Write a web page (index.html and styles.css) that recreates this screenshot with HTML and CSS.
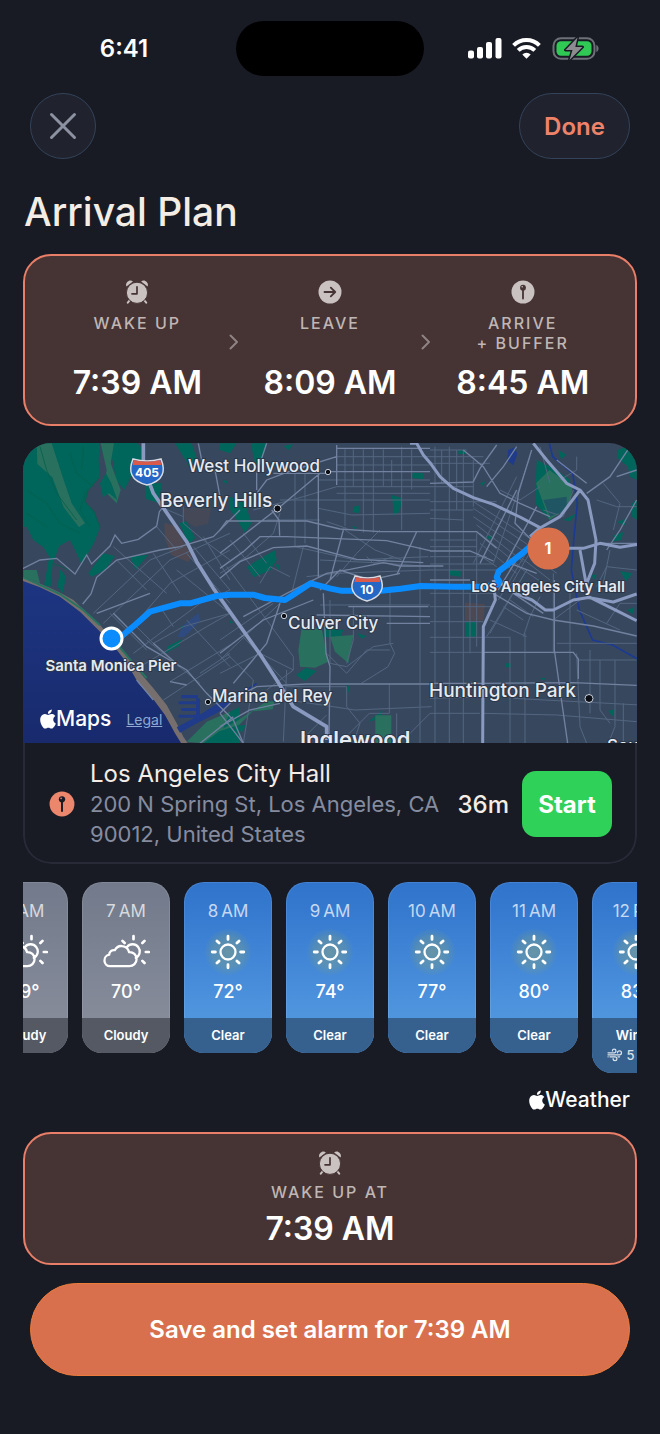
FILE: index.html
```html
<!DOCTYPE html>
<html lang="en">
<head>
<meta charset="utf-8">
<meta name="viewport" content="width=device-width, initial-scale=1">
<title>Arrival Plan</title>
<link rel="stylesheet" href="styles.css">
</head>
<body>
<svg class="defs" aria-hidden="true">
  <symbol id="alarm" viewBox="0 0 24 24">
    <path fill="currentColor" d="M1.400 6.600C.400 4.600 1.300 1.800 3.700.900 5.200.300 6.900.600 7.900 1.600zM22.600 6.600C23.600 4.600 22.700 1.800 20.300.900 18.800.300 17.100.600 16.100 1.600z"/>
    <path stroke="currentColor" stroke-width="2" stroke-linecap="round" d="M4.500 20.500 2.800 22.700M19.500 20.500l1.700 2.200"/>
    <circle class="cut" cx="12" cy="12.800" r="10.600" fill="currentColor" stroke-width="1"/>
    <path class="cut" fill="none" stroke-width="1.700" stroke-linecap="round" stroke-linejoin="round" d="M12 6.800v7H7"/>
  </symbol>
  <symbol id="go" viewBox="0 0 24 24">
    <circle cx="12" cy="12" r="11.500" fill="currentColor"/>
    <path class="cut" fill="none" stroke-width="1.800" stroke-linecap="round" stroke-linejoin="round" d="M6.500 12h10.500M12.800 7.600 17.200 12l-4.400 4.400"/>
  </symbol>
  <symbol id="pin" viewBox="0 0 24 24">
    <circle cx="12" cy="12" r="11.500" fill="currentColor"/>
    <circle class="cut-fill" cx="12" cy="7.700" r="2.900"/>
    <path class="cut" stroke-width="1.800" stroke-linecap="round" d="M12 10v8.500"/>
    <circle cx="11.200" cy="6.800" r=".8" fill="currentColor"/>
  </symbol>
  <symbol id="chevron" viewBox="0 0 10 16">
    <path fill="none" stroke="currentColor" stroke-width="2" stroke-linecap="round" stroke-linejoin="round" d="M1.500 1.500 8 8l-6.500 6.500"/>
  </symbol>
  <symbol id="apple" viewBox="2 0 20 24">
    <path fill="currentColor" d="M12.152 6.896c-.948 0-2.415-1.078-3.960-1.040-2.040.027-3.910 1.183-4.961 3.014-2.117 3.675-.546 9.103 1.519 12.090 1.013 1.454 2.208 3.090 3.792 3.039 1.520-.065 2.090-.987 3.935-.987 1.831 0 2.350.987 3.960.948 1.637-.026 2.676-1.480 3.676-2.948 1.156-1.688 1.636-3.325 1.662-3.415-.039-.013-3.182-1.221-3.220-4.857-.026-3.040 2.480-4.494 2.597-4.559-1.429-2.090-3.623-2.324-4.390-2.376-2-.156-3.675 1.090-4.610 1.090zM15.530 3.830c.843-1.012 1.400-2.427 1.245-3.830-1.207.052-2.662.805-3.532 1.818-.780.896-1.454 2.338-1.273 3.714 1.338.104 2.715-.688 3.559-1.701"/>
  </symbol>
  <radialGradient id="glow"><stop offset="0" stop-color="#b5b44a" stop-opacity=".34"/><stop offset=".7" stop-color="#8fa860" stop-opacity=".24"/><stop offset="1" stop-color="#6f9a80" stop-opacity=".08"/></radialGradient>
  <symbol id="sun" viewBox="0 0 48 48">
    <circle cx="24" cy="24" r="23" fill="url(#glow)"/>
    <g fill="none" stroke="#fff" stroke-linecap="round">
      <circle cx="24" cy="24" r="7.500" stroke-width="2.300"/>
      <path stroke-width="2.800" d="M24 8.200v3.200M24 36.600v3.200M8.200 24h3.200M36.600 24h3.200M12.900 12.900l2.200 2.200M32.900 32.900l2.200 2.200M35.100 12.900l-2.200 2.200M15.100 32.900l-2.200 2.200"/>
    </g>
  </symbol>
  <symbol id="cloudy" viewBox="0 0 48 48">
    <g fill="none" stroke="#fff" stroke-linecap="round" stroke-linejoin="round">
      <path stroke-width="2.300" d="M8 38.200a5.800 5.800 0 0 1-.8-11.500c0-3 2.600-5 5.600-4.500 1.600-3 4.500-4.500 7.400-4.100 3.500.4 6 2.700 6.900 6 4.200-.3 7.500 2.800 7.500 6.900 0 4-3.200 7.200-7.200 7.200zM25 18.900a7.200 7.200 0 1 1 8.800 11"/>
      <path stroke-width="2.700" d="M31.500 8.200v3M20.500 12.900l2.100 2.100M42.500 12.900l-2.100 2.100M43.800 24h3M40.400 32.900l2.100 2.100"/>
    </g>
  </symbol>
  <symbol id="wind" viewBox="0 0 16 14">
    <path fill="none" stroke="currentColor" stroke-width="1.200" stroke-linecap="round" d="M1 4.800h6.200a1.800 1.800 0 1 0-1.800-1.800M1 6.800h11.500a2 2 0 1 0-2-2M3 8.800h5a1.900 1.900 0 1 1-1.900 1.900M1 8.800h.2M11 8.800h1.600"/>
  </symbol>
</svg>

<header class="status">
  <time class="clock">6:41</time>
  <div class="island"></div>
  <svg class="signals" viewBox="0 0 132 24" role="img" aria-label="Signal, Wi-Fi, battery charging">
    <g fill="#fff">
      <rect x="0" y="13.500" width="6" height="8" rx="2"/><rect x="9" y="10" width="6" height="11.500" rx="2"/><rect x="18" y="5" width="6" height="16.500" rx="2"/><rect x="27.500" y="1" width="6" height="20.500" rx="2"/>
      <path d="M58.500 21.800l-4.200-4.300a6 6 0 0 1 8.400 0z"/>
    </g>
    <g fill="none" stroke="#fff" stroke-width="4"><path d="M50.200 13.400a11.800 11.800 0 0 1 16.600 0"/><path d="M45.600 8.300a18.300 18.300 0 0 1 25.800 0"/></g>
    <rect x="85.500" y="1.200" width="41" height="20.600" rx="7.500" fill="none" stroke="#6e7078" stroke-width="2"/>
    <rect x="88.500" y="4.200" width="35" height="14.600" rx="4.500" fill="#30c954"/>
    <path d="M128.300 8v7c3-1.200 3-5.800 0-7z" fill="#6e7078"/>
    <path d="M109.500.5 97.500 13h7l-3 10 13-13h-7.200z" fill="#8d8b92" stroke="#191b24" stroke-width="3" stroke-linejoin="round" paint-order="stroke"/>
  </svg>
</header>

<main class="page">
  <nav class="toolbar">
    <button class="glass close" aria-label="Close"><svg viewBox="0 0 28 28" aria-hidden="true"><path d="M2.500 2.500l23 23M25.500 2.500l-23 23" stroke="currentColor" stroke-width="3" stroke-linecap="round"/></svg></button>
    <button class="glass done">Done</button>
  </nav>

  <h1>Arrival Plan</h1>

  <section class="tinted plan">
    <div class="step"><svg class="icon"><use href="#alarm"/></svg><span class="label">WAKE UP</span><time class="big">7:39 AM</time></div>
    <svg class="chev"><use href="#chevron"/></svg>
    <div class="step"><svg class="icon"><use href="#go"/></svg><span class="label">LEAVE</span><time class="big">8:09 AM</time></div>
    <svg class="chev"><use href="#chevron"/></svg>
    <div class="step"><svg class="icon"><use href="#pin"/></svg><span class="label">ARRIVE<br>+ BUFFER</span><time class="big">8:45 AM</time></div>
  </section>

  <section class="trip">
    <div class="map">
    <svg class="chart" viewBox="23 443 614 300" preserveAspectRatio="xMidYMid slice" role="img" aria-label="Route from Santa Monica Pier to Los Angeles City Hall">
      <defs>
        <linearGradient id="sea" x1="0" y1="0" x2="0" y2="1"><stop offset="0" stop-color="#1d3582"/><stop offset="1" stop-color="#182a6c"/></linearGradient>
      </defs>
      <rect x="0" y="400" width="700" height="400" fill="#37485e"/>
      <g transform="translate(20 440) scale(.333333)">
        <!-- parks and hills -->
        <g fill="#00655a">
          <path d="M0 0H240L236 60 240 110 205 150 195 185 222 215 240 262 222 310 185 372 165 330 150 300 118 318 98 370 92 440 72 436 88 350 70 322 40 300 20 260 0 262z"/>
          <path d="M112 440l10-52 14 20-6 52zM242 0l100 0 30 30-4 90-30-20-25 50-25-30-10-60-30-20zM375 130l50 0-8 60-40-14zM205 400l45-60 35 8-30 42-40 20zM330 350l55-6-38 46zM465 10l50 0 20 60-20 20zM478 250l20-6 28 50-20 18zM435 640l10-22 40-20-8 20zM480 560l15-4-6 14zM540 910l60-80 60-30v110zM120 390l15 40-12 30z"/>
          <g transform="translate(600)"><path d="M0 10h50l-20 30-30-10zM92 10h45l-10 70-22-10zM190 18l30-6-14 18zM30 170l45 20 20 60-20 28-45-70zM80 380l85-50 5 30-18 30-50 22zM165 372l16 4-6 14zM515 165l32 10-8 40-16 12zM402 200l16-4-2 24-18-4zM578 98l32 2v18l-34-4zM10 120l14 4-8 10zM228 705l30-22 32 10-36 30zM310 560l60 10-10 25-50-5zM410 580l30 8-14 8zM378 736l12 4-4 18zM445 845l42-34-4 24zM20 862l60-8-14 22zM396 258l16 4-8 6zM32 540l8 8-12 2z"/></g>
          <g transform="translate(1230)"><path d="M60 390l32 2v18l-32-4zM106 546h38v44h-38zM320 60l60 30 40 30 0 50-60 70-45-50zM562 30l58-20v110l-20-10-6-30-32-26zM400 240l40-20-20 24zM550 286l30-10-6 24-24 4zM570 394l38 6-20 24zM590 510l24-8-6 20zM534 812l20-4-4 22zM226 670h16v12h-16zM150 130l16-6-6 14zM85 30h20v12h-20zM168 290l18-4-6 14zM330 714l16 0-4 8zM385 30l24 14-16 14zM606 190l14-10v60l-14-10zM486 404l14 0-10 20zM560 246l30-10-6 20z"/></g>
        </g>
        <g fill="#29705f">
          <path d="M50 10h45l36 110 24 70 40 60-18 12-46-60-34-90-45-40zM242 10h40l-10 60 30 80-12 40-40-40 10-60zM10 390l40 0 10 40-50-20z"/>
          <path d="M500 905l60-60 70-30-20 50-60 45zM845 565l60 0 20 100-40 18-45-3-5-50zM930 590l70-5-15 85-40-35z"/>
          <path d="M1066 826h48v84h-48zM600 870l40-20 100-66 24 0-6 24-60 6-40 40-60 20zM1548 130l40-40 70 50-10 60-60 40z"/>
        </g>
        <path fill="#205663" d="M1570 180l70-10 0 40-50 20z"/>
        <path fill="#00655a" d="M240 130l18-30 16 30 18 50-25-20-18 12z"/>
        <g fill="#54484f"><path d="M433 248l30 10 52 90-10 18-50-20-20-50z" opacity=".8"/><path d="M490 205h84l-10 46-40 10-30-20z" opacity=".5"/><path d="M1335 488l60 4-5 50-55 0z" opacity=".8"/></g>
        <g stroke="#00604a" stroke-width="3" fill="none" opacity=".75"><path d="M60 20l20 70 30 70 60 80M150 40l20 60 50 40M190 20l-5 70M20 150l60 40 40 60 60 30M20 220l60 40M200 150l-20 60 30 50M98 370l50 20M240 110l-35 40-10 35 27 30 18 47"/></g>
        <!-- coast -->
        <path fill="#776f6d" d="M0 408Q90 440 160 480L240 555 300 625 335 668 400 745 440 795 470 850 490 890 510 920H470L420 850 370 790 350 740 300 660 230 572 150 495 0 425z"/>
        <path fill="url(#sea)" d="M0 420L60 442 120 470 180 515 235 570 275 610 320 668 355 730 400 778 435 825 465 880 490 920H0z"/>
        <path fill="none" stroke="#26735f" stroke-width="6" d="M10 412L120 462 190 510 240 556M290 610l50 60 40 44"/>
        <path fill="#1f3b89" d="M484 765h50v10h-50zM476 784h56v9h-56zM484 804h56v9h-56zM476 824h60v9h-60zM528 775h12v65h-12zM470 862l60-32 60-38 50-12-50 40-60 30-50 28z"/>
        <path fill="#2b4b8b" opacity=".7" d="M472 590l20-36 44-36 6 24-50 50z"/>
        <path fill="#1f3b89" d="M1464 30l20-8 8 20-12 34-18-14z"/>
        <path fill="none" stroke="#1d3a92" stroke-width="5" d="M1588 10l10 40 60 50 14 90-10 100-8 100 24 120 40 90 60 15 80 45M600 820l50-50 60-40"/>
        <!-- small streets -->
        <g fill="none" stroke="#53657f" stroke-width="3">
          <path d="M280 320l160 140M220 520l170-160 100-40M250 550l200-190 180-80M290 360l90 90M320 580l130-150 180-100M340 550l60 60 90-50 140-40M340 640l200-150 90-40M380 600l160 130M270 520l110 110M400 340l80 120M420 500l40 60M470 390l160 130M500 340l130 150M520 320l110 130M550 290l80 130M360 680l200-120 70-40M450 725l180-110M540 700l90-60M430 780l200-130M500 540l130 140M410 260l60 70M490 200v50l60 50 80 60M420 200l70 30"/>
          <path transform="translate(600)" d="M0 400l80-50 80-70 20-60M20 380l120 160 80 110v40l-80 60M0 600l160-110M0 660l190-180M0 700l120-60 100 50M60 580l140 150M200 690l-10 215M30 300l90 110M70 280l70 90M250 320l-40 160M225 100v220M255 100v210M100 210l150-40 100-30M140 240h160M180 180h450M295 120h335M295 205l100 20 235-5M320 245l60 20M350 50h280M350 75h280M375 28v230M400 28v110M430 28v250M460 28v250M490 28v110M545 20v250M575 28v120M515 60v80M350 140h280M350 160h280M225 320l180 40 220-10M300 360l200 10 130 10M260 410l90-10 280-10M300 495h330M510 440v170l14 30-20 40-80 50M400 500v100l-20 70M320 640l60 60 60-70h70M200 740h180v60l40 50-20 60M205 780l200 30 230-10M508 730v90h-60l-60 60M600 320v590M440 350l20 20 60-20M330 480v190l50 10 80-60 60-10M350 410l60-70 70-70M240 905l80-80M530 820v90M560 890l70-70M120 430l30-50 60 30M375 270l90 60 80 30M20 640l80 80-30 190"/>
          <path transform="translate(1230)" d="M0 30h110M0 50h160M0 70h180M0 140h130M0 185h200M0 210h130M0 235l100 5M0 300h140M0 320h140M0 350h170M0 372h190M0 390h200M0 460h190M0 500h190M0 545h160M0 592h240M0 637h160M0 775l160-4M0 820h150M15 20v890M58 20v890M100 30v880M35 30v100M80 30v180M130 60v140M120 460v180M140 280v340M130 185l200 130M130 205l180 120M130 230l160 110M140 255l140 110M150 280l120 100M150 310l110 90M140 340l60 40M260 110l-130 260M300 50l-110 320M170 590l120-200M180 580l110-190M205 480l100-170M240 440l70-120M250 370l90 60M270 350l90 70M290 330l90 70M220 500l60 40M240 480l70 50M180 540l110 50M285 580v330M240 590v320M370 400v240M330 470l-30 60-20 60M380 610h240M420 440v300M160 820l220 5 240 20M250 775l380 20M440 660h180M510 660v150l30 40M555 660v200l-20 50M480 630v190M530 550l40-60 50 0M440 510l130 60M370 540l80-60M440 640l10 220 20 50M580 790v120M330 20l30 110M500 180l60 20h60M520 130l50 60-20 80M540 330l-20 100M500 440l30-60 90 10M390 120l50-30 0-40M340 210l60 20 30-80M210 150l60 30 60-40"/>
        </g>
        <!-- main streets -->
        <g fill="none" stroke="#71819f" stroke-width="4">
          <path d="M0 390L60 360 110 355 165 402 200 345 215 372 270 318 285 285 305 310 355 298 410 258 418 215 430 200M188 492l25-30 17-50 60-52 130-30 60-10 100-30 80-80M230 520l160-60M280 520l100 100 120 70 60 70 80 80 30 70M450 725l50 10M400 610l80 70M535 10l10 50 40 30 15 80M350 720l50 60M540 910l100-80"/>
          <path transform="translate(600)" d="M0 340l180-140 120-100M140 10l-30 90 0 50M110 160l30-40 80-30 130-40M0 270l20-27h240l100 24 120 8h150M0 385l70-50 50-45h80l300 12 130 30M0 415l60-50 100-42 100-5 150 40 200 10M155 210l22 30 2 47M295 100v310M350 15v120M350 25h280M320 95h310M160 100h160M0 640l130-100 150-60M70 530l130-70 120-60 70-12 100-20 50 10h130M300 450l60-60 90 30 90-20M0 820l50-50 60-30 150-8h370M0 860l90-50 90-20M0 820l70 90M180 490l-40 120-100 120M310 460l8 180 12 40-3 210M385 500h240M500 550h130M370 270l-40 150M590 275l-60 130M290 525l340 5"/>
          <path transform="translate(1230)" d="M100 30l60 50 50 80 60 30 90 40M0 130l130-4M0 275h140l60 50M0 333h120l70 30M0 420h120M0 730h160M160 730l270-2 190 8M160 637h270l15 20 0 60M240 370l80 30M130 125l20-40 50-70M260 20l-40 60-50 60M305 30l-40 130-10 90 50 50M320 200l-120 220M150 370l110-220M205 450l60-100M190 460l100 60 80 20 120 18 130 30M373 420v210l40 280M620 180l-50 90-40 60M600 20l-60 90-70 50M560 110l60-20M380 60l90 70M620 310l-120 0M250 460l90 60"/>
        </g>
        <!-- freeways -->
        <g fill="none" stroke-linejoin="round">
          <path stroke="#8999c0" stroke-width="11" d="M370 10v70l30 80 100 145 30 60 50 80 145 205 45 70 50 80 100 60v40"/>
          <g transform="translate(1230)" stroke="#8999c0" stroke-width="9">
            <path d="M-60 10h20l20 35L0 68l30 42 40 35 60 28 60 20 80 38 60 32M310 10l40 50 60 70 40 20-60 80-60 34-30 26M450 150l24 30 24 120-4 70-24 60M400 325l60 0 50-15 60 12 60-10M450 330l20 110M190 420l6 60-36 80-2 350M196 420l60 40 50 20 40 30h24l60-30 50-8 80 40 60 30M470 472l80 14 70-24"/>
          </g>
        </g>
        <path fill="none" stroke="#0a8cff" stroke-width="18" stroke-linejoin="round" stroke-linecap="round" d="M295 597l50-42 45-40 90-25h30l80-22 40-4h70l35 10 60 6 25-16 52-34 60 16 30 6h120l60-6 60-8 100 2h80l50-6 6-10-8-12 6-18 66-50 30-26"/>
      </g>

      <g class="shield">
        <path d="M133 459q14 4 28 0 4 10 1 16-3 7-15 10-12-3-15-10-3-6 1-16z" fill="#2467c5" stroke="#d9dce4" stroke-width="1.500"/><path d="M133.800 460q13 3 26.400 0l1.300 5h-29z" fill="#d95a4b"/>
        <text x="147" y="477">405</text>
        <path d="M355 576q13 4 25 0 4 10 1 15-3 7-14 10-11-3-14-10-3-5 2-15z" fill="#2467c5" stroke="#d9dce4" stroke-width="1.500"/><path d="M355.800 577q12 3 23.400 0l1.300 5h-26z" fill="#d95a4b"/>
        <text x="367" y="594">10</text>
      </g>
      <g fill="#0b0d14" stroke="#c9d0dc" stroke-width="1"><circle cx="328" cy="472" r="2.700"/><circle cx="277.500" cy="508.500" r="3.500"/><circle cx="284" cy="616" r="2.700"/><circle cx="208" cy="702" r="2.700"/><circle cx="589" cy="698.500" r="4"/></g>
      <g class="places">
        <text class="s" x="188" y="472">West Hollywood</text>
        <text class="m" x="160" y="507">Beverly Hills</text>
        <text class="s" x="288" y="629">Culver City</text>
        <text class="s" x="212" y="702">Marina del Rey</text>
        <text class="m" x="429" y="697">Huntington Park</text>
        <text class="l" x="300" y="747">Inglewood</text>
        <text class="s" x="607" y="752">South Gate</text>
        <text class="stop" x="111" y="671">Santa Monica Pier</text>
        <text class="stop" x="548" y="592">Los Angeles City Hall</text>
      </g>
      <circle cx="111.500" cy="638.500" r="10.500" fill="#0a8cff" stroke="#fff" stroke-width="3"/>
      <circle cx="548.500" cy="548.500" r="21" fill="#d9704c"/>
      <text class="num" x="548" y="554">1</text>
    </svg>
    <div class="credit"><span class="brand"><svg><use href="#apple"/></svg>Maps</span><a href="#legal">Legal</a></div>
    </div>
    <div class="stop-row">
      <svg class="icon dest"><use href="#pin"/></svg>
      <div class="address"><strong>Los Angeles City Hall</strong><span>200 N Spring St, Los Angeles, CA 90012, United States</span></div>
      <span class="mins">36m</span>
      <button class="start">Start</button>
    </div>
  </section>

  <section>
    <ul class="hours">
      <li class="hour cloudy"><span class="at">6&#8201;AM</span><svg><use href="#cloudy"/></svg><b>69°</b><span class="sky">Cloudy</span></li>
      <li class="hour cloudy"><span class="at">7&#8201;AM</span><svg><use href="#cloudy"/></svg><b>70°</b><span class="sky">Cloudy</span></li>
      <li class="hour"><span class="at">8&#8201;AM</span><svg><use href="#sun"/></svg><b>72°</b><span class="sky">Clear</span></li>
      <li class="hour"><span class="at">9&#8201;AM</span><svg><use href="#sun"/></svg><b>74°</b><span class="sky">Clear</span></li>
      <li class="hour"><span class="at">10&#8201;AM</span><svg><use href="#sun"/></svg><b>77°</b><span class="sky">Clear</span></li>
      <li class="hour"><span class="at">11&#8201;AM</span><svg><use href="#sun"/></svg><b>80°</b><span class="sky">Clear</span></li>
      <li class="hour"><span class="at">12&#8201;PM</span><svg><use href="#sun"/></svg><b>83°</b><span class="sky">Windy<span class="gust"><svg><use href="#wind"/></svg>5 mph</span></span></li>
    </ul>
    <div class="brand weather"><svg><use href="#apple"/></svg>Weather</div>
  </section>

  <section class="tinted wake">
    <svg class="icon"><use href="#alarm"/></svg><span class="label">WAKE UP AT</span><time class="big">7:39 AM</time>
  </section>

  <button class="save">Save and set alarm for 7:39 AM</button>
</main>
</body>
</html>
```
FILE: styles.css
```css
* { box-sizing: border-box; }
body {
  margin: 0;
  min-height: 100vh;
  background: #191b24;
  color: #fff;
  font-family: Inter, "Liberation Sans", sans-serif;
}
button { font-family: inherit; cursor: pointer; padding: 0; }
svg { display: block; flex: none; }
.defs { position: absolute; width: 0; height: 0; }

.status {
  display: grid;
  grid-template-columns: 1fr 188px 1fr;
  align-items: center;
  padding-top: 21px;
}
.clock { justify-self: center; padding-left: 12px; font-size: 24px; font-weight: 600; }
.island { height: 55px; border-radius: 28px; background: #000; }
.signals { width: 132px; height: 24px; justify-self: center; margin-right: 16px; }

.page { padding: 0 23px 56px; }
.toolbar { display: flex; justify-content: space-between; padding: 17px 7px 0; }
.glass {
  height: 66px;
  border: 1px solid #33435a;
  border-radius: 33px;
  background: #20222d;
  display: flex;
  align-items: center;
  justify-content: center;
}
.close { width: 66px; color: #8d92a3; }
.close svg { width: 28px; height: 28px; }
.done { width: 111px; color: #ee836a; font-size: 24px; font-weight: 600; }

h1 { margin: 28px 0 18px; padding-left: 1px; color: #f3ede6; font-size: 39px; line-height: 49px; font-weight: 500; }

.tinted { border: 2px solid #e97f68; border-radius: 28px; background: #463334; }
.cut { stroke: var(--cut, #463334); }
.cut-fill { fill: var(--cut, #463334); }
.icon { width: 24px; height: 24px; color: #c9c2c1; }
.label { font-size: 16px; line-height: 20px; letter-spacing: 2px; font-weight: 500; color: #c0b6b4; text-align: center; }
.big { font-size: 32px; line-height: 40px; font-weight: 600; white-space: nowrap; }

.plan { display: flex; align-items: center; padding: 24px 21px 21px; }
.step { flex: 1 1 0; display: flex; flex-direction: column; align-items: center; }
.step .label { margin: 9px 0 10px; min-height: 40px; }
.chev { width: 10px; height: 16px; color: #8f8383; }

.trip { margin-top: 17px; border-radius: 28px; overflow: hidden; }
.map { position: relative; }
.chart { width: 100%; height: 300px; }
.places { fill: #e6eaf0; stroke: #2b3648; stroke-width: 2px; paint-order: stroke; font-weight: 500; }
.s { font-size: 17px; }
.m { font-size: 19px; }
.l { font-size: 22px; font-weight: 600; }
.stop { font-size: 15px; font-weight: 600; text-anchor: middle; }
.shield { fill: #fff; font-size: 12px; font-weight: 700; text-anchor: middle; }
.num { fill: #fff; font-size: 16px; font-weight: 700; text-anchor: middle; }
.credit { position: absolute; left: 17px; bottom: 10px; display: flex; align-items: center; gap: 15px; }
.brand { display: flex; align-items: center; font-size: 21px; line-height: 28px; font-weight: 500; }
.brand svg { width: 16px; height: 20px; }
.credit a { font-size: 14px; color: #8fa9d2; }

.stop-row {
  display: flex;
  align-items: center;
  padding: 16px 23px 13px 24px;
  border: 2px solid #282a37;
  border-top: 0;
  border-radius: 0 0 28px 28px;
}
.dest { --cut: #191b24; width: 26px; height: 26px; color: #ec866d; }
.address { flex: 1; margin-left: 15px; font-size: 22px; line-height: 30px; color: #868ca0; }
.address strong { display: block; color: #f3ede6; font-size: 24px; font-weight: 400; }
.mins { margin: 0 13px; font-size: 24px; font-weight: 500; color: #f3ede6; }
.start { width: 90px; height: 66px; border: 0; border-radius: 14px; background: #30d158; color: #fff; font-size: 24px; font-weight: 700; }

.hours { list-style: none; margin: 18px 0 0; padding: 0; display: flex; justify-content: center; align-items: flex-start; gap: 14px; overflow: hidden; }
.hour {
  flex: none;
  width: 88px;
  border-radius: 20px;
  overflow: hidden;
  background: linear-gradient(#2f73cb, #4084d6 70px, #5096de 136px);
  box-shadow: inset 0 0 0 1px #ffffff1a;
  display: flex;
  flex-direction: column;
  align-items: center;
  padding-top: 17px;
  white-space: nowrap;
}
.hour.cloudy { background: linear-gradient(#727a8b, #858b99 136px); }
.hour svg { width: 48px; height: 48px; }
.at { font-size: 17px; line-height: 24px; color: #ffffffb8; }
.hour > svg { margin-top: 5px; }
.hour b { font-size: 18px; line-height: 24px; font-weight: 500; margin: 4px 0 14px; }
.sky { width: 100%; background: #36618f; font-size: 13px; line-height: 20px; padding: 7px 0 8px; text-align: center; font-weight: 600; }
.cloudy .sky { background: #555963; }
.gust { display: flex; justify-content: center; align-items: center; gap: 4px; font-weight: 500; color: #ffffffd0; }
.hour .gust svg { width: 16px; height: 14px; }

.weather { justify-content: flex-end; padding-right: 7px; margin: 13px 0 18px; }

.wake { display: flex; flex-direction: column; align-items: center; padding: 17px 0 14px; }
.wake .label { margin: 7px 0; }
.save {
  display: block;
  width: calc(100% - 14px);
  height: 93px;
  margin: 18px auto 0;
  border: 1px solid #ec7c3a;
  border-radius: 47px;
  background: #d9704d;
  color: #fff;
  font-size: 24px;
  font-weight: 600;
}
```
